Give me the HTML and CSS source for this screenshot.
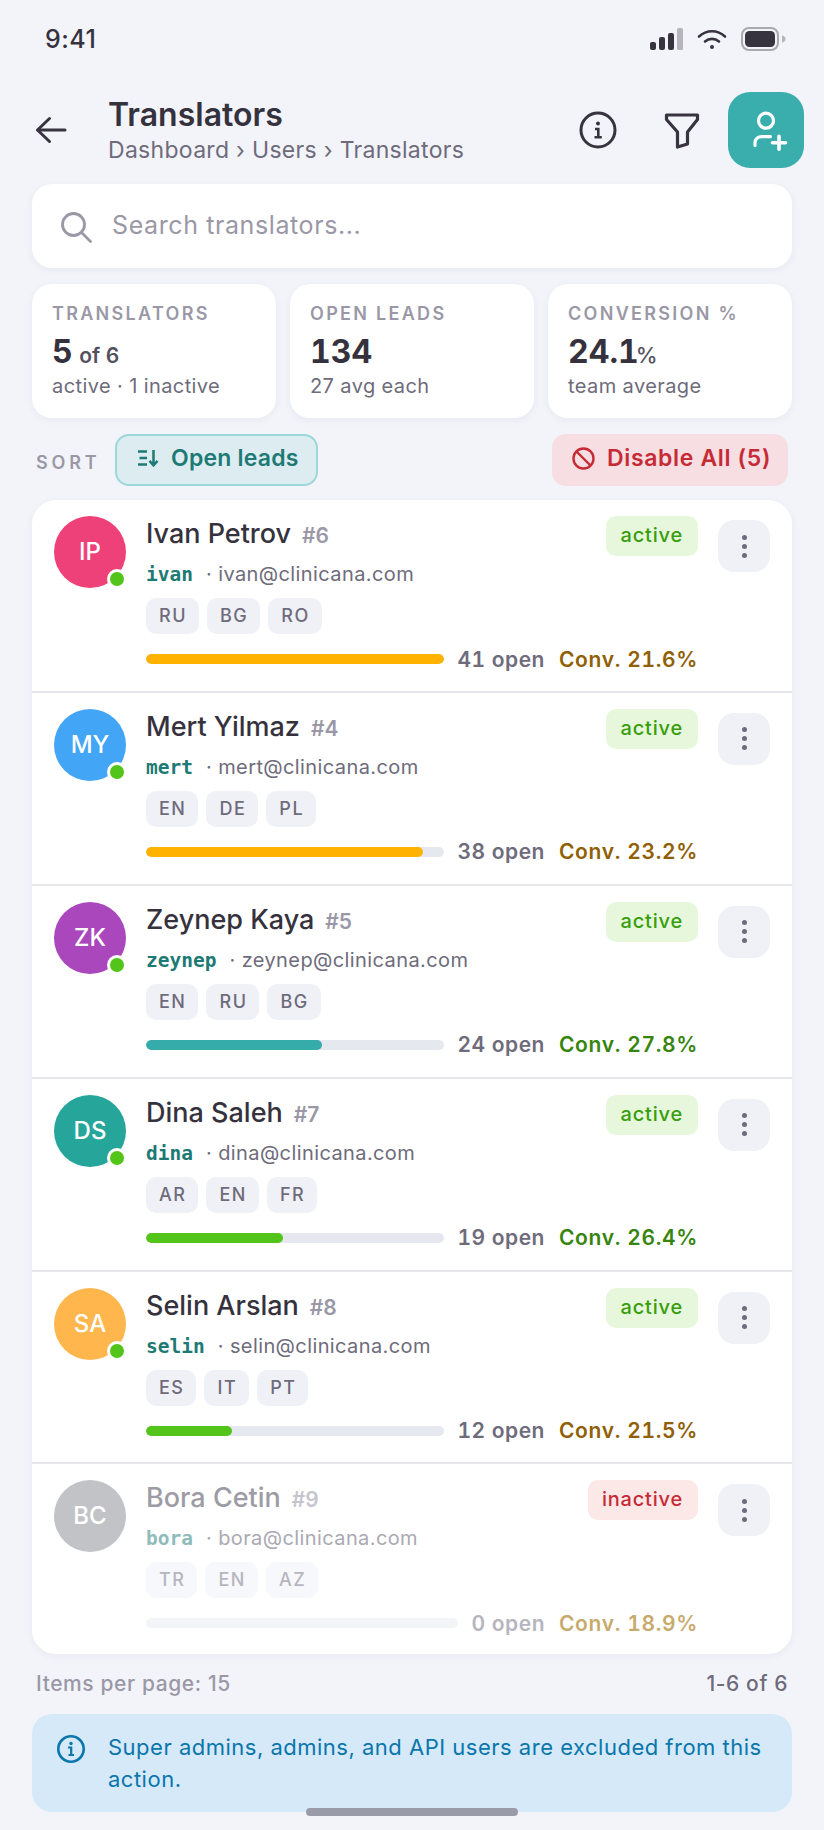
FILE: index.html
```html
<!DOCTYPE html>
<html lang="en">
<head>
<meta charset="utf-8">
<title>Translators</title>
<link rel="stylesheet" href="styles.css">
</head>
<body>
<div class="page">
  <div class="status">
    <span class="time">9:41</span>
    <div class="status-icons">
      <svg width="34" height="22" viewBox="0 0 34 22"><rect x="1" y="14" width="6" height="8" rx="2" fill="#37333f"/><rect x="10" y="9" width="6" height="13" rx="2" fill="#37333f"/><rect x="19" y="5" width="6" height="17" rx="2" fill="#37333f"/><rect x="28" y="0" width="6" height="22" rx="1.5" fill="#b5b5bb"/></svg>
      <svg width="30" height="22" viewBox="0 0 30 22" fill="none" stroke="#37333f" stroke-width="2.6" stroke-linecap="round"><path d="M2 8.500C9.500 1.500 20.500 1.500 28 8.500"/><path d="M8 13.500C12 10 18 10 22 13.500"/><circle cx="15" cy="19" r="2" fill="#37333f" stroke="none"/></svg>
      <svg width="46" height="24" viewBox="0 0 46 24"><rect x="1" y="1" width="36" height="22" rx="7" fill="none" stroke="#a9a9b0" stroke-width="2"/><rect x="4" y="4" width="30" height="16" rx="4.500" fill="#37333f"/><path d="M41 8.500c2.500.5 3.500 2 3.500 3.500s-1 3-3.500 3.500z" fill="#b5b5bb"/></svg>
    </div>
  </div>

  <header class="header">
    <svg class="back" width="32" height="28" viewBox="0 0 32 28" fill="none" stroke="#37333f" stroke-width="3" stroke-linecap="round" stroke-linejoin="round"><path d="M30 14H3"/><path d="M14.500 2.500L2.500 14L14.500 25.500"/></svg>
    <div class="titles">
      <div class="title">Translators</div>
      <div class="crumbs">Dashboard › Users › Translators</div>
    </div>
    <svg class="hicon info-icon" width="38" height="38" viewBox="0 0 38 38" fill="none" stroke="#37333f" stroke-width="3"><circle cx="19" cy="19" r="17"/><circle cx="19" cy="12.500" r="2" fill="#37333f" stroke="none"/><path d="M16 18H19.300V26M15.500 26.300H22.800" stroke-width="2.600"/></svg>
    <svg class="hicon filter-icon" width="36" height="38" viewBox="0 0 36 38" fill="none" stroke="#37333f" stroke-width="3.200" stroke-linejoin="round"><path d="M2.500 3H33.500V7.500L23.500 20V32L13.500 35V20L2.500 7.500Z"/></svg>
    <button class="add-btn" type="button">
      <svg width="76" height="76" viewBox="0 0 76 76" fill="none" stroke="#fff" stroke-width="3.200" stroke-linecap="round"><circle cx="38" cy="28.700" r="7.500"/><path d="M27 53.500V51c0-4 3-6.400 7-6.400h8.500"/><path d="M44.500 50.700H57.500M51 44.200V57.200" stroke-width="3.600"/></svg>
    </button>
  </header>

  <div class="search">
    <svg width="31" height="31" viewBox="0 0 31 31" fill="none" stroke="#9a98a6" stroke-width="2.800" stroke-linecap="round"><circle cx="12.500" cy="12.500" r="11"/><path d="M20.500 20.500L29.500 29.500"/></svg>
    <span class="search-text">Search translators...</span>
  </div>

  <div class="stats">
    <div class="stat"><div class="stat-label">TRANSLATORS</div><div class="stat-value">5 <small class="of">of 6</small></div><div class="stat-sub">active · 1 inactive</div></div>
    <div class="stat"><div class="stat-label">OPEN LEADS</div><div class="stat-value">134</div><div class="stat-sub">27 avg each</div></div>
    <div class="stat"><div class="stat-label">CONVERSION %</div><div class="stat-value">24.1<small class="pct">%</small></div><div class="stat-sub">team average</div></div>
  </div>

  <div class="sortbar">
    <span class="sort-label">SORT</span>
    <button class="sort-btn" type="button">
      <svg width="22" height="18" viewBox="0 0 22 18" fill="none" stroke="#1d7a74" stroke-width="2.500"><path d="M1 2.500H10M2.500 9H10M1 15.500H10"/><path d="M16.500 1V16M12.500 11.800L16.500 16.300L20.500 11.800"/></svg>
      Open leads
    </button>
    <button class="disable-btn" type="button">
      <svg width="23" height="23" viewBox="0 0 23 23" fill="none" stroke="#c62b35" stroke-width="2.400"><circle cx="11.500" cy="11.500" r="10"/><path d="M4.500 4.500L18.500 18.500"/></svg>
      Disable All (5)
    </button>
  </div>

  <div class="list">
    <div class="row">
      <div class="avatar pink">IP<i class="dot"></i></div>
      <div class="main">
        <div class="top"><div class="name-wrap"><span class="name">Ivan Petrov</span><span class="num">#6</span></div><span class="badge on">active</span></div>
        <div class="ids"><code class="user">ivan</code><span class="email">· ivan@clinicana.com</span></div>
        <div class="tags"><span class="tag">RU</span><span class="tag">BG</span><span class="tag">RO</span></div>
        <div class="metrics"><div class="track"><div class="fill amber" style="width:100%"></div></div><span class="open">41 open</span><span class="conv low">Conv. 21.6%</span></div>
      </div>
      <button class="more" type="button"><i></i><i></i><i></i></button>
    </div>
    <div class="row">
      <div class="avatar blue">MY<i class="dot"></i></div>
      <div class="main">
        <div class="top"><div class="name-wrap"><span class="name">Mert Yilmaz</span><span class="num">#4</span></div><span class="badge on">active</span></div>
        <div class="ids"><code class="user">mert</code><span class="email">· mert@clinicana.com</span></div>
        <div class="tags"><span class="tag">EN</span><span class="tag">DE</span><span class="tag">PL</span></div>
        <div class="metrics"><div class="track"><div class="fill amber" style="width:93%"></div></div><span class="open">38 open</span><span class="conv low">Conv. 23.2%</span></div>
      </div>
      <button class="more" type="button"><i></i><i></i><i></i></button>
    </div>
    <div class="row">
      <div class="avatar purple">ZK<i class="dot"></i></div>
      <div class="main">
        <div class="top"><div class="name-wrap"><span class="name">Zeynep Kaya</span><span class="num">#5</span></div><span class="badge on">active</span></div>
        <div class="ids"><code class="user">zeynep</code><span class="email">· zeynep@clinicana.com</span></div>
        <div class="tags"><span class="tag">EN</span><span class="tag">RU</span><span class="tag">BG</span></div>
        <div class="metrics"><div class="track"><div class="fill teal" style="width:59%"></div></div><span class="open">24 open</span><span class="conv high">Conv. 27.8%</span></div>
      </div>
      <button class="more" type="button"><i></i><i></i><i></i></button>
    </div>
    <div class="row">
      <div class="avatar green">DS<i class="dot"></i></div>
      <div class="main">
        <div class="top"><div class="name-wrap"><span class="name">Dina Saleh</span><span class="num">#7</span></div><span class="badge on">active</span></div>
        <div class="ids"><code class="user">dina</code><span class="email">· dina@clinicana.com</span></div>
        <div class="tags"><span class="tag">AR</span><span class="tag">EN</span><span class="tag">FR</span></div>
        <div class="metrics"><div class="track"><div class="fill lime" style="width:46%"></div></div><span class="open">19 open</span><span class="conv high">Conv. 26.4%</span></div>
      </div>
      <button class="more" type="button"><i></i><i></i><i></i></button>
    </div>
    <div class="row">
      <div class="avatar orange">SA<i class="dot"></i></div>
      <div class="main">
        <div class="top"><div class="name-wrap"><span class="name">Selin Arslan</span><span class="num">#8</span></div><span class="badge on">active</span></div>
        <div class="ids"><code class="user">selin</code><span class="email">· selin@clinicana.com</span></div>
        <div class="tags"><span class="tag">ES</span><span class="tag">IT</span><span class="tag">PT</span></div>
        <div class="metrics"><div class="track"><div class="fill lime" style="width:29%"></div></div><span class="open">12 open</span><span class="conv low">Conv. 21.5%</span></div>
      </div>
      <button class="more" type="button"><i></i><i></i><i></i></button>
    </div>
    <div class="row off">
      <div class="avatar gray">BC</div>
      <div class="main">
        <div class="top"><div class="name-wrap"><span class="name">Bora Cetin</span><span class="num">#9</span></div><span class="badge no">inactive</span></div>
        <div class="ids"><code class="user">bora</code><span class="email">· bora@clinicana.com</span></div>
        <div class="tags"><span class="tag">TR</span><span class="tag">EN</span><span class="tag">AZ</span></div>
        <div class="metrics"><div class="track"></div><span class="open">0 open</span><span class="conv low">Conv. 18.9%</span></div>
      </div>
      <button class="more" type="button"><i></i><i></i><i></i></button>
    </div>
  </div>

  <div class="pager"><span class="per">Items per page: 15</span><span class="range">1-6 of 6</span></div>

  <div class="notice">
    <svg width="30" height="30" viewBox="0 0 30 30" fill="none" stroke="#0a76ac" stroke-width="2.600"><circle cx="15" cy="15" r="12.700"/><circle cx="15" cy="9.500" r="1.700" fill="#0a76ac" stroke="none"/><path d="M12 13.500H15.200V20.500M12.500 21H18" stroke-width="2.200"/></svg>
    <p class="notice-text">Super admins, admins, and API users are excluded from this action.</p>
  </div>
  <div class="home"></div>
</div>
</body>
</html>
```
FILE: styles.css
```css
* { box-sizing: border-box; }
html, body { margin: 0; padding: 0; }
body { background: #f3f4fa; font-family: Inter, "Liberation Sans", sans-serif; color: #35323e; }
button { font-family: inherit; border: 0; cursor: pointer; }
.page { position: relative; width: 824px; height: 1830px; padding: 0 32px; overflow: hidden; }

.status { height: 76px; padding: 1px 0 0 13px; display: flex; align-items: center; justify-content: space-between; }
.time { font-size: 25px; font-weight: 500; letter-spacing: .5px; }
.status-icons { display: flex; align-items: center; gap: 14px; margin-right: 5px; }

.header { height: 76px; margin: 16px -12px 16px 0; display: flex; align-items: center; }
.back { margin-left: 3px; flex: none; }
.titles { margin-left: 41px; flex: 1; padding-top: 5px; }
.title { font-size: 32px; font-weight: 600; line-height: 36px; margin-top: -3px; }
.crumbs { font-size: 23px; line-height: 30px; margin-top: 2px; color: #6e6b7b; letter-spacing: .3px; }
.hicon { flex: none; }
.info-icon { margin-right: 47px; }
.filter-icon { margin-right: 28px; margin-top: 1px; }
.add-btn { width: 76px; height: 76px; border-radius: 22px; background: #39aeac; padding: 0; flex: none; }
.add-btn svg { display: block; }

.search { height: 84px; background: #fff; border-radius: 20px; box-shadow: 0 2px 8px rgba(40, 40, 80, .05); display: flex; align-items: center; padding: 0 0 2px 29px; gap: 20px; }
.search svg { margin-top: 4px; }
.search-text { font-size: 25px; color: #9a98a6; letter-spacing: .6px; }

.stats { display: grid; grid-template-columns: repeat(3, 1fr); gap: 14px; margin-top: 16px; }
.stat { height: 134px; background: #fff; border-radius: 20px; box-shadow: 0 2px 8px rgba(40, 40, 80, .05); padding: 19px 6px 0 20px; }
.stat-label { font-size: 18px; font-weight: 600; line-height: 22px; letter-spacing: 2.300px; color: #9a98a6; white-space: nowrap; }
.stat-value { font-size: 32px; font-weight: 700; line-height: 40px; height: 40px; margin-top: 7px; color: #35323e; font-variant-numeric: tabular-nums; }
.of { font-size: 21px; font-weight: 600; color: #54515e; line-height: 1; margin-left: -2px; }
.pct { font-size: 22px; font-weight: 500; color: #54515e; margin-left: -3px; line-height: 1; }
.stat-sub { font-size: 20px; line-height: 26px; color: #6e6b7b; margin-top: 1px; letter-spacing: .4px; }

.sortbar { height: 52px; margin-top: 16px; padding: 0 4px; display: flex; align-items: center; }
.sort-label { font-size: 18px; font-weight: 600; letter-spacing: 3.800px; color: #9a98a6; margin-top: 4px; width: 79px; }
.sort-btn { width: 203px; height: 52px; border-radius: 14px; background: #ddecf1; border: 2px solid #9cd8d8; color: #1d7a74; font-size: 23px; font-weight: 600; letter-spacing: .2px; display: flex; align-items: center; gap: 12px; padding: 0 0 4px 20px; }
.disable-btn { margin-left: auto; width: 236px; height: 52px; border-radius: 14px; background: #f6dee3; color: #c62b35; font-size: 23px; font-weight: 600; letter-spacing: .65px; display: flex; align-items: center; gap: 12px; padding: 0 0 4px 20px; }

.list { margin-top: 14px; background: #fff; border-radius: 24px; box-shadow: 0 2px 8px rgba(40, 40, 80, .05); overflow: hidden; }
.row { display: flex; align-items: flex-start; height: 192.900px; padding: 16px 22px 0 22px; border-bottom: 2px solid #e6e7eb; }
.row:last-child { border-bottom: 0; height: 189.500px; }
.avatar { position: relative; flex: none; width: 72px; height: 72px; border-radius: 50%; color: #fff; font-size: 24px; font-weight: 500; display: flex; align-items: center; justify-content: center; padding-bottom: 1px; }
.pink { background: #ee4079; }
.blue { background: #42a5f5; }
.purple { background: #ab47bc; }
.green { background: #26a69a; }
.orange { background: #ffb74d; }
.gray { background: #c2c3c7; }
.dot { position: absolute; right: -1px; bottom: -1px; width: 20px; height: 20px; border-radius: 50%; background: #52c41a; border: 3px solid #fff; }

.main { flex: 1; min-width: 0; margin-left: 20px; }
.top { display: flex; justify-content: space-between; align-items: flex-start; height: 40px; }
.name-wrap { display: flex; align-items: baseline; gap: 11px; margin-top: 1px; }
.name { font-size: 27px; font-weight: 500; line-height: 34px; color: #35323e; }
.num { font-size: 21px; font-weight: 600; color: #9a98a6; }
.badge { height: 40px; border-radius: 10px; font-size: 20px; font-weight: 500; line-height: 38px; letter-spacing: .8px; padding: 0 15px; }
.badge.on { background: #e6f7dc; color: #389e0d; }
.badge.no { background: #fde8e8; color: #c62b35; padding: 0 15px 0 14px; }
.ids { display: flex; align-items: baseline; height: 30px; margin-top: 3px; line-height: 30px; }
.user { font-family: "DejaVu Sans Mono", monospace; font-size: 19.500px; font-weight: 700; color: #1d7a74; margin-right: 13px; }
.email { font-size: 20px; color: #6e6b7b; letter-spacing: .4px; }
.tags { display: flex; gap: 8px; margin-top: 9px; }
.tag { height: 36px; border-radius: 10px; background: #f0f1f7; color: #6e6b7b; font-size: 18px; font-weight: 500; letter-spacing: 1.500px; line-height: 36px; padding: 0 12px 0 13px; }
.metrics { display: flex; align-items: center; gap: 14px; margin-top: 13px; height: 24px; }
.track { flex: 1; height: 10px; border-radius: 5px; background: #e6e8f0; overflow: hidden; }
.fill { height: 100%; border-radius: 5px; }
.amber { background: #ffb300; }
.teal { background: #36acaa; }
.lime { background: #52c41a; }
.open { font-size: 21px; font-weight: 600; color: #6e6b7b; letter-spacing: .5px; font-variant-numeric: tabular-nums; }
.conv { font-size: 21px; font-weight: 600; letter-spacing: .65px; font-variant-numeric: tabular-nums; }
.conv.low { color: #8f6005; }
.conv.high { color: #37850f; }
.more { flex: none; width: 52px; height: 52px; margin: 4px 0 0 20px; border-radius: 16px; background: #f0f1f7; display: flex; flex-direction: column; align-items: center; justify-content: center; gap: 4px; padding: 0; }
.more i { width: 5px; height: 5px; border-radius: 50%; background: #6e6b7b; }

.off .name { color: #9d9ca4; }
.off .num { color: #c6c5ce; }
.off .user { color: #8fbcba; }
.off .email { color: #aaa9b3; }
.off .tag { background: #f7f8fb; color: #b6b5be; }
.off .track { background: #f3f4f8; }
.off .open { color: #b6b5be; }
.off .conv { color: #c7ab6d; }

.pager { display: flex; justify-content: space-between; padding: 0 4px; margin-top: 17px; height: 26px; line-height: 26px; font-size: 21px; font-weight: 500; letter-spacing: .6px; }
.per { color: #9a98a6; }
.range { color: #6e6b7b; }
.notice { margin-top: 17px; height: 98px; background: #d5e9f9; border-radius: 20px; display: flex; align-items: flex-start; padding: 17px 20px 0 24px; gap: 22px; }
.notice svg { flex: none; margin-top: 3px; }
.notice-text { margin: 0; font-size: 22px; line-height: 32px; color: #0a76ac; letter-spacing: .5px; }
.home { position: absolute; left: 306px; top: 1808px; width: 212px; height: 8px; border-radius: 4px; background: #9a9ba8; }
```
